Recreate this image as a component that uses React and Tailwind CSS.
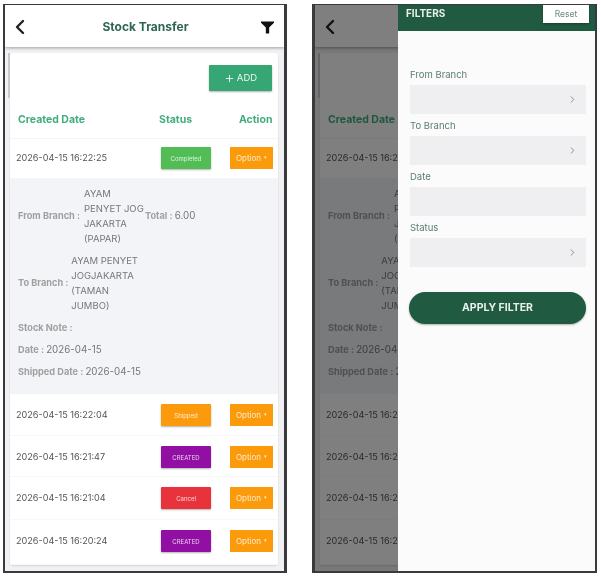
import React from 'react';
import { ChevronLeft, ChevronRight, Plus } from 'lucide-react';

const rows = [
  { date: '2026-04-15 16:22:04', status: 'Shipped', color: 'bg-[#fb9a0a]', h: 'h-[42px]' },
  { date: '2026-04-15 16:21:47', status: 'CREATED', color: 'bg-[#920fa3]', h: 'h-[41px]' },
  { date: '2026-04-15 16:21:04', status: 'Cancel', color: 'bg-[#e8323c]', h: 'h-[43px]' },
  { date: '2026-04-15 16:20:24', status: 'CREATED', color: 'bg-[#920fa3]', h: 'h-[45px]' },
];

function RowContent({ date, status, color }) {
  return (
    <div className="flex items-center h-[22px]">
      <span className="flex-1 mb-[1px] text-[9.1px] text-[#555]">{date}</span>
      <span className={`w-[50px] h-[22px] flex items-center justify-center rounded-[1px] text-[6px] text-white/80 shadow-[0_1px_2px_rgba(0,0,0,0.3)] ${color}`}>
        {status}
      </span>
      <span className="ml-[19px] mr-[5px] w-[43px] h-[22px] flex items-center justify-center gap-[3px] bg-[#fb9a0a] text-[8px] text-white/80">
        Option <span className="text-[5px]">▾</span>
      </span>
    </div>
  );
}

function Label({ children }) {
  return <span className="font-bold text-[#a0a0a0] text-[9.2px]">{children}</span>;
}

function StockList() {
  return (
    <div className="flex flex-col h-full bg-[#f1f1f3]">
      <header className="relative h-[42px] shrink-0 flex items-center justify-between pt-[2px] pl-[3px] pr-[10px] bg-white shadow-[0_1px_3px_rgba(0,0,0,0.35)]">
        <ChevronLeft size={24} strokeWidth={2.4} className="text-[#222]" />
        <h1 className="mr-[2px] text-[12px] font-bold text-[#2f6650]">Stock Transfer</h1>
        <svg width="13" height="13" viewBox="0 0 14 13">
          <path d="M0 0h14v1.5L8.8 6.6V13H5.2V6.6L0 1.5z" fill="#111" />
        </svg>
      </header>

      <div className="relative ml-[5px] mr-[6px] mt-[6px] bg-white rounded-[3px] shadow-[0_1px_2px_rgba(0,0,0,0.12)]">
        <div className="absolute -left-[2px] top-0 w-[2px] h-[45px] bg-[#c9c9cc]" />
        <div className="flex justify-end pt-[12px] pr-[6px]">
          <button className="w-[63px] h-[26px] flex items-center justify-center gap-[2px] bg-[#36a674] rounded-[1px] text-[9.5px] text-white/90 shadow-[0_1px_2px_rgba(0,0,0,0.3)]">
            <Plus size={11} />ADD
          </button>
        </div>
        <div className="flex items-center h-[47px] pt-[11px] pl-[8px] text-[10.5px] font-bold text-[#41ad7d]">
          <span className="flex-1">Created Date</span>
          <span className="w-[80px]">Status</span>
          <span className="w-[39px]">Action</span>
        </div>
        <div className="pt-[8px] pl-[6px] h-[40px] border-t border-[#f4f4f4]">
          <RowContent date="2026-04-15 16:22:25" status="Completed" color="bg-[#53bd55]" />
        </div>

        <div className="bg-[#f3f4f7] pl-[8px] pb-[15px] text-[9.8px] text-[#777]">
          <div className="flex items-center gap-[4px] pt-[8px]">
            <Label>From Branch :</Label>
            <div className="w-[57px] text-[9.5px] leading-[15px] whitespace-nowrap">AYAM<br />PENYET JOG<br />JAKARTA<br />(PAPAR)</div>
            <span><Label>Total : </Label>6.00</span>
          </div>
          <div className="flex items-center gap-[3px] mt-[7px]">
            <Label>To Branch :</Label>
            <div className="text-[9.5px] leading-[15px] whitespace-nowrap">AYAM PENYET<br />JOGJAKARTA<br />(TAMAN<br />JUMBO)</div>
          </div>
          <div className="mt-[7px] leading-[15px]"><Label>Stock Note :</Label></div>
          <div className="mt-[7px] leading-[15px]"><Label>Date : </Label>2026-04-15</div>
          <div className="mt-[7px] leading-[15px]"><Label>Shipped Date : </Label>2026-04-15</div>
        </div>

        {rows.map((r, i) => (
          <div key={i} className={`pt-[10px] pl-[6px] border-b border-[#f8f8f8] ${r.h}`}>
            <RowContent {...r} />
          </div>
        ))}
      </div>
    </div>
  );
}

function Field({ label, arrow = true }) {
  return (
    <div className="mb-[4px]">
      <div className="h-[18px] leading-[15px] text-[9.5px] text-[#5d7d6e]">{label}</div>
      <div className="h-[29px] flex items-center justify-end pr-[8px] bg-[#efeff1]">
        {arrow && <ChevronRight size={11} className="text-[#888]" />}
      </div>
    </div>
  );
}

function FilterPanel() {
  return (
    <aside className="absolute top-0 bottom-0 right-0 w-[197px] bg-[#fbfbfc]">
      <div className="flex justify-between h-[26px] pl-[8px] pr-[6px] bg-[#205a40]">
        <span className="mt-[1px] text-[10px] font-bold text-white/90">FILTERS</span>
        <button className="w-[46px] h-[18px] bg-white text-[8.5px] text-[#6d8a7c] shadow-[0_1px_2px_rgba(0,0,0,0.3)]">Reset</button>
      </div>
      <div className="pl-[12px] pr-[9px] pt-[36px]">
        <Field label="From Branch" />
        <Field label="To Branch" />
        <Field label="Date" arrow={false} />
        <Field label="Status" />
        <button className="mt-[21px] -ml-px w-[177px] h-[32px] rounded-full bg-[#205a40] text-[10.5px] font-bold text-white/90 shadow-[0_1px_2px_rgba(0,0,0,0.3)]">
          APPLY FILTER
        </button>
      </div>
    </aside>
  );
}

function Phone({ className, children }) {
  return (
    <div className={`relative h-[569px] border-t border-b-2 border-[#3a3a3e] overflow-hidden ${className}`}>
      <StockList />
      {children}
    </div>
  );
}

export default function App() {
  return (
    <div className="w-[601px] h-[576px] bg-white flex gap-[25px] pl-[3px] pt-[4px] font-['Inter','Liberation_Sans',sans-serif] blur-[0.4px]">
      <Phone className="w-[284px] border-l-2 border-r-[3px]" />
      <Phone className="w-[285px] border-l-[3px] border-r-2">
        <div className="absolute inset-0 bg-black/50" />
        <FilterPanel />
      </Phone>
    </div>
  );
}
